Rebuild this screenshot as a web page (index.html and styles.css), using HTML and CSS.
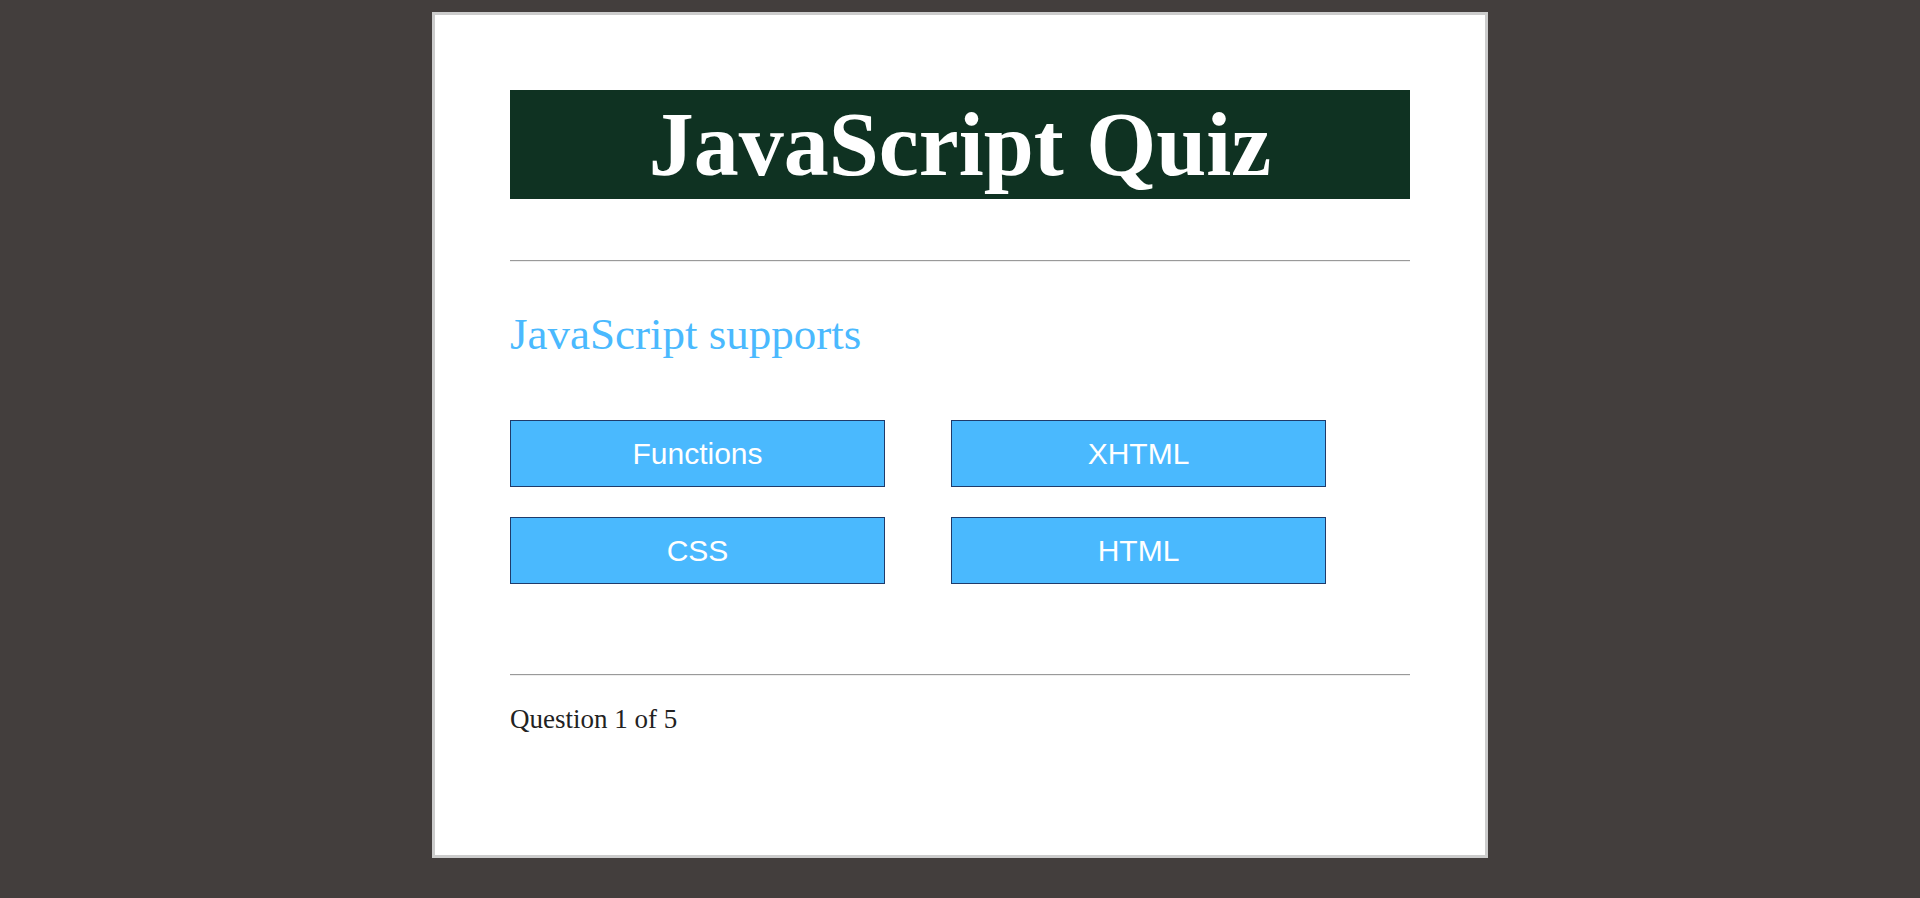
FILE: index.html
```html
<!DOCTYPE html>
<html lang="en">
<head>
<meta charset="utf-8">
<title>JavaScript Quiz</title>
<link rel="stylesheet" href="styles.css">
</head>
<body>
<div class="quiz">
  <h1 class="quiz-title">JavaScript Quiz</h1>
  <hr class="rule rule-top">
  <h2 class="question">JavaScript supports</h2>
  <div class="choices">
    <button class="choice">Functions</button>
    <button class="choice">XHTML</button>
    <button class="choice">CSS</button>
    <button class="choice">HTML</button>
  </div>
  <hr class="rule rule-bottom">
  <p class="progress">Question 1 of 5</p>
</div>
</body>
</html>
```

FILE: styles.css
```css
html, body {
  margin: 0;
  padding: 0;
}

body {
  background: #433e3d;
  font-family: "Liberation Serif", "Times New Roman", serif;
}

.quiz {
  width: 900px;
  height: 690px;
  margin: 12px auto 0;
  padding: 75px;
  background: #ffffff;
  border: 3px solid #cccccc;
}

.quiz-title {
  margin: 0;
  height: 109px;
  line-height: 109px;
  background: #0f3222;
  color: #ffffff;
  font-family: "Liberation Serif", "Times New Roman", serif;
  font-weight: bold;
  font-size: 90px;
  text-align: center;
}

.rule {
  height: 0;
  border: 0;
  border-top: 1px solid #9a9a9a;
  border-bottom: 1px solid #eeeeee;
  margin: 0;
}

.rule-top {
  margin-top: 61px;
}

.question {
  margin: 46px 0 0;
  font-family: "Liberation Serif", "Times New Roman", serif;
  font-weight: normal;
  font-size: 45px;
  color: #4ab9fe;
}

.choices {
  display: grid;
  grid-template-columns: 375px 375px;
  column-gap: 66px;
  row-gap: 30px;
  margin-top: 60px;
}

.choice {
  box-sizing: border-box;
  height: 67px;
  padding: 0;
  margin: 0;
  background: #4ab9fe;
  border: 1px solid #1f3b6b;
  color: #ffffff;
  font-family: "Liberation Sans", Arial, sans-serif;
  font-size: 30px;
  line-height: 59px;
  text-align: center;
  cursor: pointer;
}

.rule-bottom {
  margin-top: 90px;
}

.progress {
  margin: 28px 0 0;
  font-family: "Liberation Serif", "Times New Roman", serif;
  font-size: 27px;
  color: #222222;
}
```
